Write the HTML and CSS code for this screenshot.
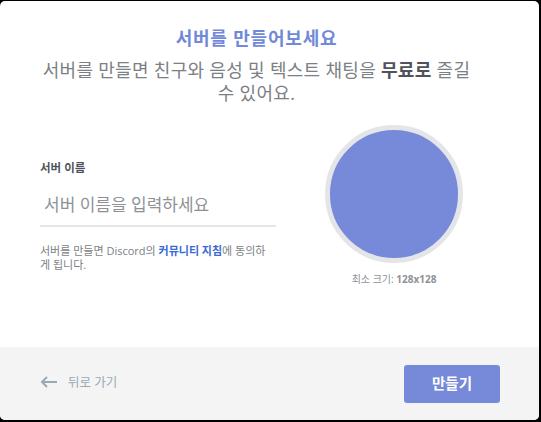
FILE: index.html
```html
<!DOCTYPE html>
<html lang="ko">
<head>
<meta charset="utf-8">
<link rel="stylesheet" href="styles.css">
</head>
<body>
<div class="modal">
  <div class="content">
    <div class="header">
      <h1 class="title">서버를 만들어보세요</h1>
      <p class="subtitle">서버를 만들면 친구와 음성 및 텍스트 채팅을 <strong>무료로</strong> 즐길<br>수 있어요.</p>
    </div>
    <div class="body">
      <div class="form">
        <div class="label">서버 이름</div>
        <div class="input">서버 이름을 입력하세요</div>
        <p class="help">서버를 만들면 Discord의 <a class="link">커뮤니티 지침</a>에 동의하<br>게 됩니다.</p>
      </div>
      <div class="icon-col">
        <div class="avatar"></div>
        <div class="size">최소 크기: <b>128x128</b></div>
      </div>
    </div>
  </div>
  <div class="footer">
    <div class="back">
      <svg class="arrow" width="18" height="12" viewBox="0 0 18 12"><path d="M17 6H2M7 1L2 6l5 5" fill="none" stroke="#99aab5" stroke-width="2"/></svg>
      <span>뒤로 가기</span>
    </div>
    <div class="button">만들기</div>
  </div>
</div>
</body>
</html>
```
FILE: styles.css
```css
html, body {
  margin: 0;
  padding: 0;
  background: #000;
}
body {
  width: 541px;
  height: 422px;
  font-family: "Open Sans", "Noto Sans CJK KR", sans-serif;
  overflow: hidden;
}
.modal {
  margin-top: 1px;
  width: 539px;
  height: 419px;
  background: #fff;
  border-radius: 5px;
  overflow: hidden;
  display: flex;
  flex-direction: column;
}
.content {
  flex: 1;
  padding-top: 26px;
}
.header {
  padding-right: 26px;
}
.title {
  margin: 0;
  text-align: center;
  font-size: 18px;
  line-height: 22px;
  font-weight: 700;
  letter-spacing: 0.8px;
  color: #7289da;
}
.subtitle {
  margin: 10px 0 0;
  text-align: center;
  font-size: 18px;
  line-height: 23px;
  letter-spacing: 0.3px;
  color: #7c7f85;
}
.subtitle strong {
  color: #4f545c;
  font-weight: 700;
}
.body {
  display: flex;
  padding: 0 40px;
  margin-top: 20px;
}
.form {
  width: 236px;
  padding-top: 36px;
}
.label {
  font-size: 11.5px;
  line-height: 14px;
  font-weight: 700;
  color: #4f545c;
}
.input {
  margin-top: 10px;
  height: 40px;
  line-height: 40px;
  padding-left: 4px;
  font-size: 17px;
  color: #8e9297;
  border-bottom: 2px solid #e3e5e8;
}
.help {
  margin: 17px 0 0;
  font-size: 11px;
  line-height: 13.5px;
  color: #7c7f85;
  white-space: nowrap;
}
.link {
  color: #3a6ad6;
  font-weight: 700;
}
.icon-col {
  margin-left: 49px;
  width: 138px;
  display: flex;
  flex-direction: column;
  align-items: center;
}
.avatar {
  width: 138px;
  height: 138px;
  box-sizing: border-box;
  border-radius: 50%;
  border: 5px solid #e3e5e8;
  background: #7789d9;
}
.size {
  margin-top: 9px;
  font-size: 10px;
  line-height: 14px;
  color: #8e9297;
  white-space: nowrap;
}
.size b {
  color: #8e9297;
}
.footer {
  height: 73px;
  background: #f4f4f5;
  display: flex;
  align-items: center;
  justify-content: space-between;
  padding: 0 39px 0 40px;
}
.back {
  display: flex;
  align-items: center;
  gap: 10px;
  font-size: 12.5px;
  color: #99aab5;
  margin-top: -4px;
}
.arrow {
  display: block;
}
.button {
  width: 96px;
  height: 38px;
  line-height: 38px;
  text-align: center;
  background: #7789d9;
  color: #fff;
  border-radius: 3px;
  font-size: 14.5px;
  font-weight: 700;
}
```
